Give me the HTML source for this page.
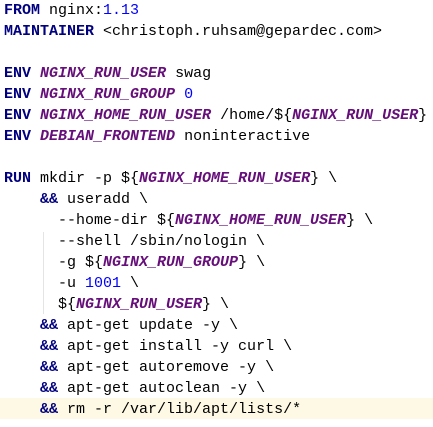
<!DOCTYPE html>
<html><head><style>
body{margin:0;background:#fff;width:433px;height:427px;overflow:hidden;position:relative}
pre{margin:0;position:absolute;top:0;left:4px;font-family:"Liberation Mono","Courier New",monospace;font-size:15px;line-height:21px;color:#000;}
.k{color:#000080;font-weight:bold}
.v{color:#660e7a;font-weight:bold;font-style:italic}
.n{color:#0000ff}
.hl{position:absolute;left:0;top:398px;width:433px;height:21px;background:#fdf9e4}
.g{position:absolute;left:43px;top:232px;width:1px;height:82px;background:#e4e4e4}
</style></head><body>
<div class="hl"></div><div class="g"></div>
<pre><span class="k">FROM</span> nginx:<span class="n">1.13</span>
<span class="k">MAINTAINER</span> &lt;christoph.ruhsam@gepardec.com&gt;

<span class="k">ENV</span> <span class="v">NGINX_RUN_USER</span> swag
<span class="k">ENV</span> <span class="v">NGINX_RUN_GROUP</span> <span class="n">0</span>
<span class="k">ENV</span> <span class="v">NGINX_HOME_RUN_USER</span> /home/${<span class="v">NGINX_RUN_USER</span>}
<span class="k">ENV</span> <span class="v">DEBIAN_FRONTEND</span> noninteractive

<span class="k">RUN</span> mkdir -p ${<span class="v">NGINX_HOME_RUN_USER</span>} \
    <span class="k">&amp;&amp;</span> useradd \
      --home-dir ${<span class="v">NGINX_HOME_RUN_USER</span>} \
      --shell /sbin/nologin \
      -g ${<span class="v">NGINX_RUN_GROUP</span>} \
      -u <span class="n">1001</span> \
      ${<span class="v">NGINX_RUN_USER</span>} \
    <span class="k">&amp;&amp;</span> apt-get update -y \
    <span class="k">&amp;&amp;</span> apt-get install -y curl \
    <span class="k">&amp;&amp;</span> apt-get autoremove -y \
    <span class="k">&amp;&amp;</span> apt-get autoclean -y \
    <span class="k">&amp;&amp;</span> rm -r /var/lib/apt/lists/*</pre>
</body></html>
